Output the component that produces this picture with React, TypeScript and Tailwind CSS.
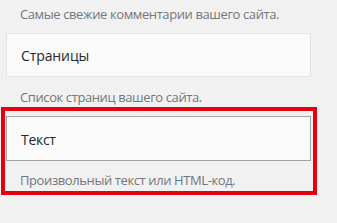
export default function App() {
  return (
    <div
      className="w-[337px] h-[223px] bg-[#f1f1f1] overflow-hidden text-[13px]"
      style={{ fontFamily: '"Open Sans", "Noto Sans", sans-serif' }}
    >
      <div className="w-[305px] ml-[6px] flex flex-col">
        <p className="pl-[14px] pt-[5px] h-[33px] leading-[18px] tracking-[-0.4px] text-[#72777c]">
          Самые свежие комментарии вашего сайта.
        </p>
        <div className="h-[44px] bg-[#fafafa] border border-[#e5e5e5] flex items-center pl-[14px] pt-[1px] text-[14px] tracking-[-0.1px] text-[#23282d]">
          Страницы
        </div>
        <p className="pl-[14px] pt-[11px] h-[30px] leading-[18px] tracking-[-0.4px] text-[#72777c]">
          Список страниц вашего сайта.
        </p>
        <div className="-ml-[5px] -mr-[6px] pl-[1px] pr-[2px] pt-[5px] border-4 border-[#e4000f]">
          <div className="h-[45px] bg-[#fafafa] border border-[#a0a5aa] flex items-center pl-[14px] pt-[1px] text-[14px] tracking-[-0.3px] text-[#23282d]">
            Текст
          </div>
          <p className="pl-[14px] pt-[10px] h-[30px] leading-[18px] tracking-[-0.4px] text-[#72777c]">
            Произвольный текст или HTML-код.
          </p>
        </div>
      </div>
    </div>
  );
}
